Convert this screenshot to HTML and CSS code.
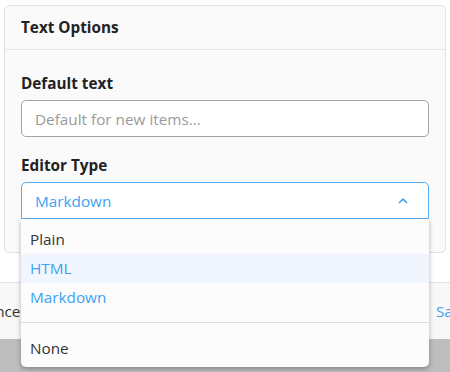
FILE: index.html
```html
<!DOCTYPE html>
<html lang="en">
<head>
    <meta charset="UTF-8">
    <meta name="viewport" content="width=device-width, initial-scale=1.0">
    <title>Text Options</title>
    <link rel="stylesheet" href="styles.css">
</head>
<body>
    <div class="dialog">
        <div class="dialog-body">
            <div class="card">
                <div class="card-header">Text Options</div>
                <div class="card-content">
                    <div class="form-group">
                        <label for="defaultText">Default text</label>
                        <input type="text" id="defaultText" placeholder="Default for new items...">
                    </div>

                    <div class="form-group">
                        <label>Editor Type</label>
                        <div class="select-wrap">
                            <div class="select open">
                                <span>Markdown</span>
                                <svg class="chevron" width="10" height="6" viewBox="0 0 10 6">
                                    <path d="M1 5 L5 1.2 L9 5" fill="none" stroke="#3da2f4" stroke-width="1.6"/>
                                </svg>
                            </div>
                            <ul class="dropdown">
                                <li>Plain</li>
                                <li class="active hover">HTML</li>
                                <li class="active">Markdown</li>
                                <li class="divider"></li>
                                <li>None</li>
                            </ul>
                        </div>
                    </div>
                </div>
            </div>
        </div>

        <div class="dialog-footer">
            <button class="btn btn-cancel">Cancel</button>
            <button class="btn btn-save">Save</button>
        </div>
    </div>
    <div class="backdrop"></div>
</body>
</html>
```

FILE: styles.css
```css
* {
    margin: 0;
    padding: 0;
    box-sizing: border-box;
}

html, body {
    height: 100%;
}

body {
    font-family: 'Open Sans', 'Noto Sans', sans-serif;
    font-size: 15.3px;
    color: #333;
    background: #bdbdbd;
    overflow: hidden;
    display: flex;
    flex-direction: column;
}

.dialog {
    background: #fff;
}

.dialog-body {
    padding: 5px 4px 29px;
}

.card {
    background: #fafafa;
    border: 1px solid #e3e3e3;
    border-radius: 5px;
}

.card-header {
    padding: 12px 16px 12px;
    font-weight: 700;
    line-height: 19px;
    color: #222;
    border-bottom: 1px solid #e6e6e6;
}

.card-content {
    padding: 23px 16px 33px;
}

.form-group + .form-group {
    margin-top: 18px;
}

.form-group label {
    display: block;
    font-weight: 700;
    line-height: 20px;
    color: #222;
    margin-bottom: 7px;
}

.form-group input {
    width: 100%;
    height: 37px;
    padding: 0 13px;
    border: 1px solid #a3a3a3;
    border-radius: 5px;
    font-family: inherit;
    font-size: inherit;
    background: #fff;
    color: #333;
    outline: none;
}

.form-group input::placeholder {
    color: #9a9a9a;
}

.select-wrap {
    position: relative;
}

.select {
    height: 37px;
    display: flex;
    align-items: center;
    justify-content: space-between;
    padding: 0 20px 0 13px;
    border: 1px solid #55aef5;
    border-radius: 5px 5px 0 0;
    background: #fff;
    color: #3da2f4;
}

.chevron {
    margin-top: 1px;
}

.dropdown {
    position: absolute;
    top: 37px;
    left: 0;
    width: 408px;
    list-style: none;
    background: #fcfcfc;
    border-radius: 0 0 5px 5px;
    box-shadow: 0 2px 5px rgba(0, 0, 0, 0.3);
    padding: 6px 0 4px;
    z-index: 10;
}

.dropdown li {
    height: 29px;
    line-height: 29px;
    padding: 0 9px;
    color: #333;
}

.dropdown li.active {
    color: #3da2f4;
}

.dropdown li.hover {
    background: #f1f6fe;
}

.dropdown li.divider {
    height: 1px;
    margin: 10px 0 11px;
    background: #dcdcdc;
}

.dialog-footer {
    display: flex;
    justify-content: space-between;
    align-items: center;
    height: 57px;
    border-top: 1px solid #e3e3e3;
    background: #f8f8f8;
    overflow: hidden;
}

.btn {
    border: none;
    background: none;
    font-family: inherit;
    font-size: inherit;
    cursor: pointer;
}

.btn-cancel {
    color: #333;
    margin-left: -23px;
}

.btn-save {
    color: #3da2f4;
    margin-right: -19px;
}

.backdrop {
    flex: 1;
    background: #bdbdbd;
}
```
